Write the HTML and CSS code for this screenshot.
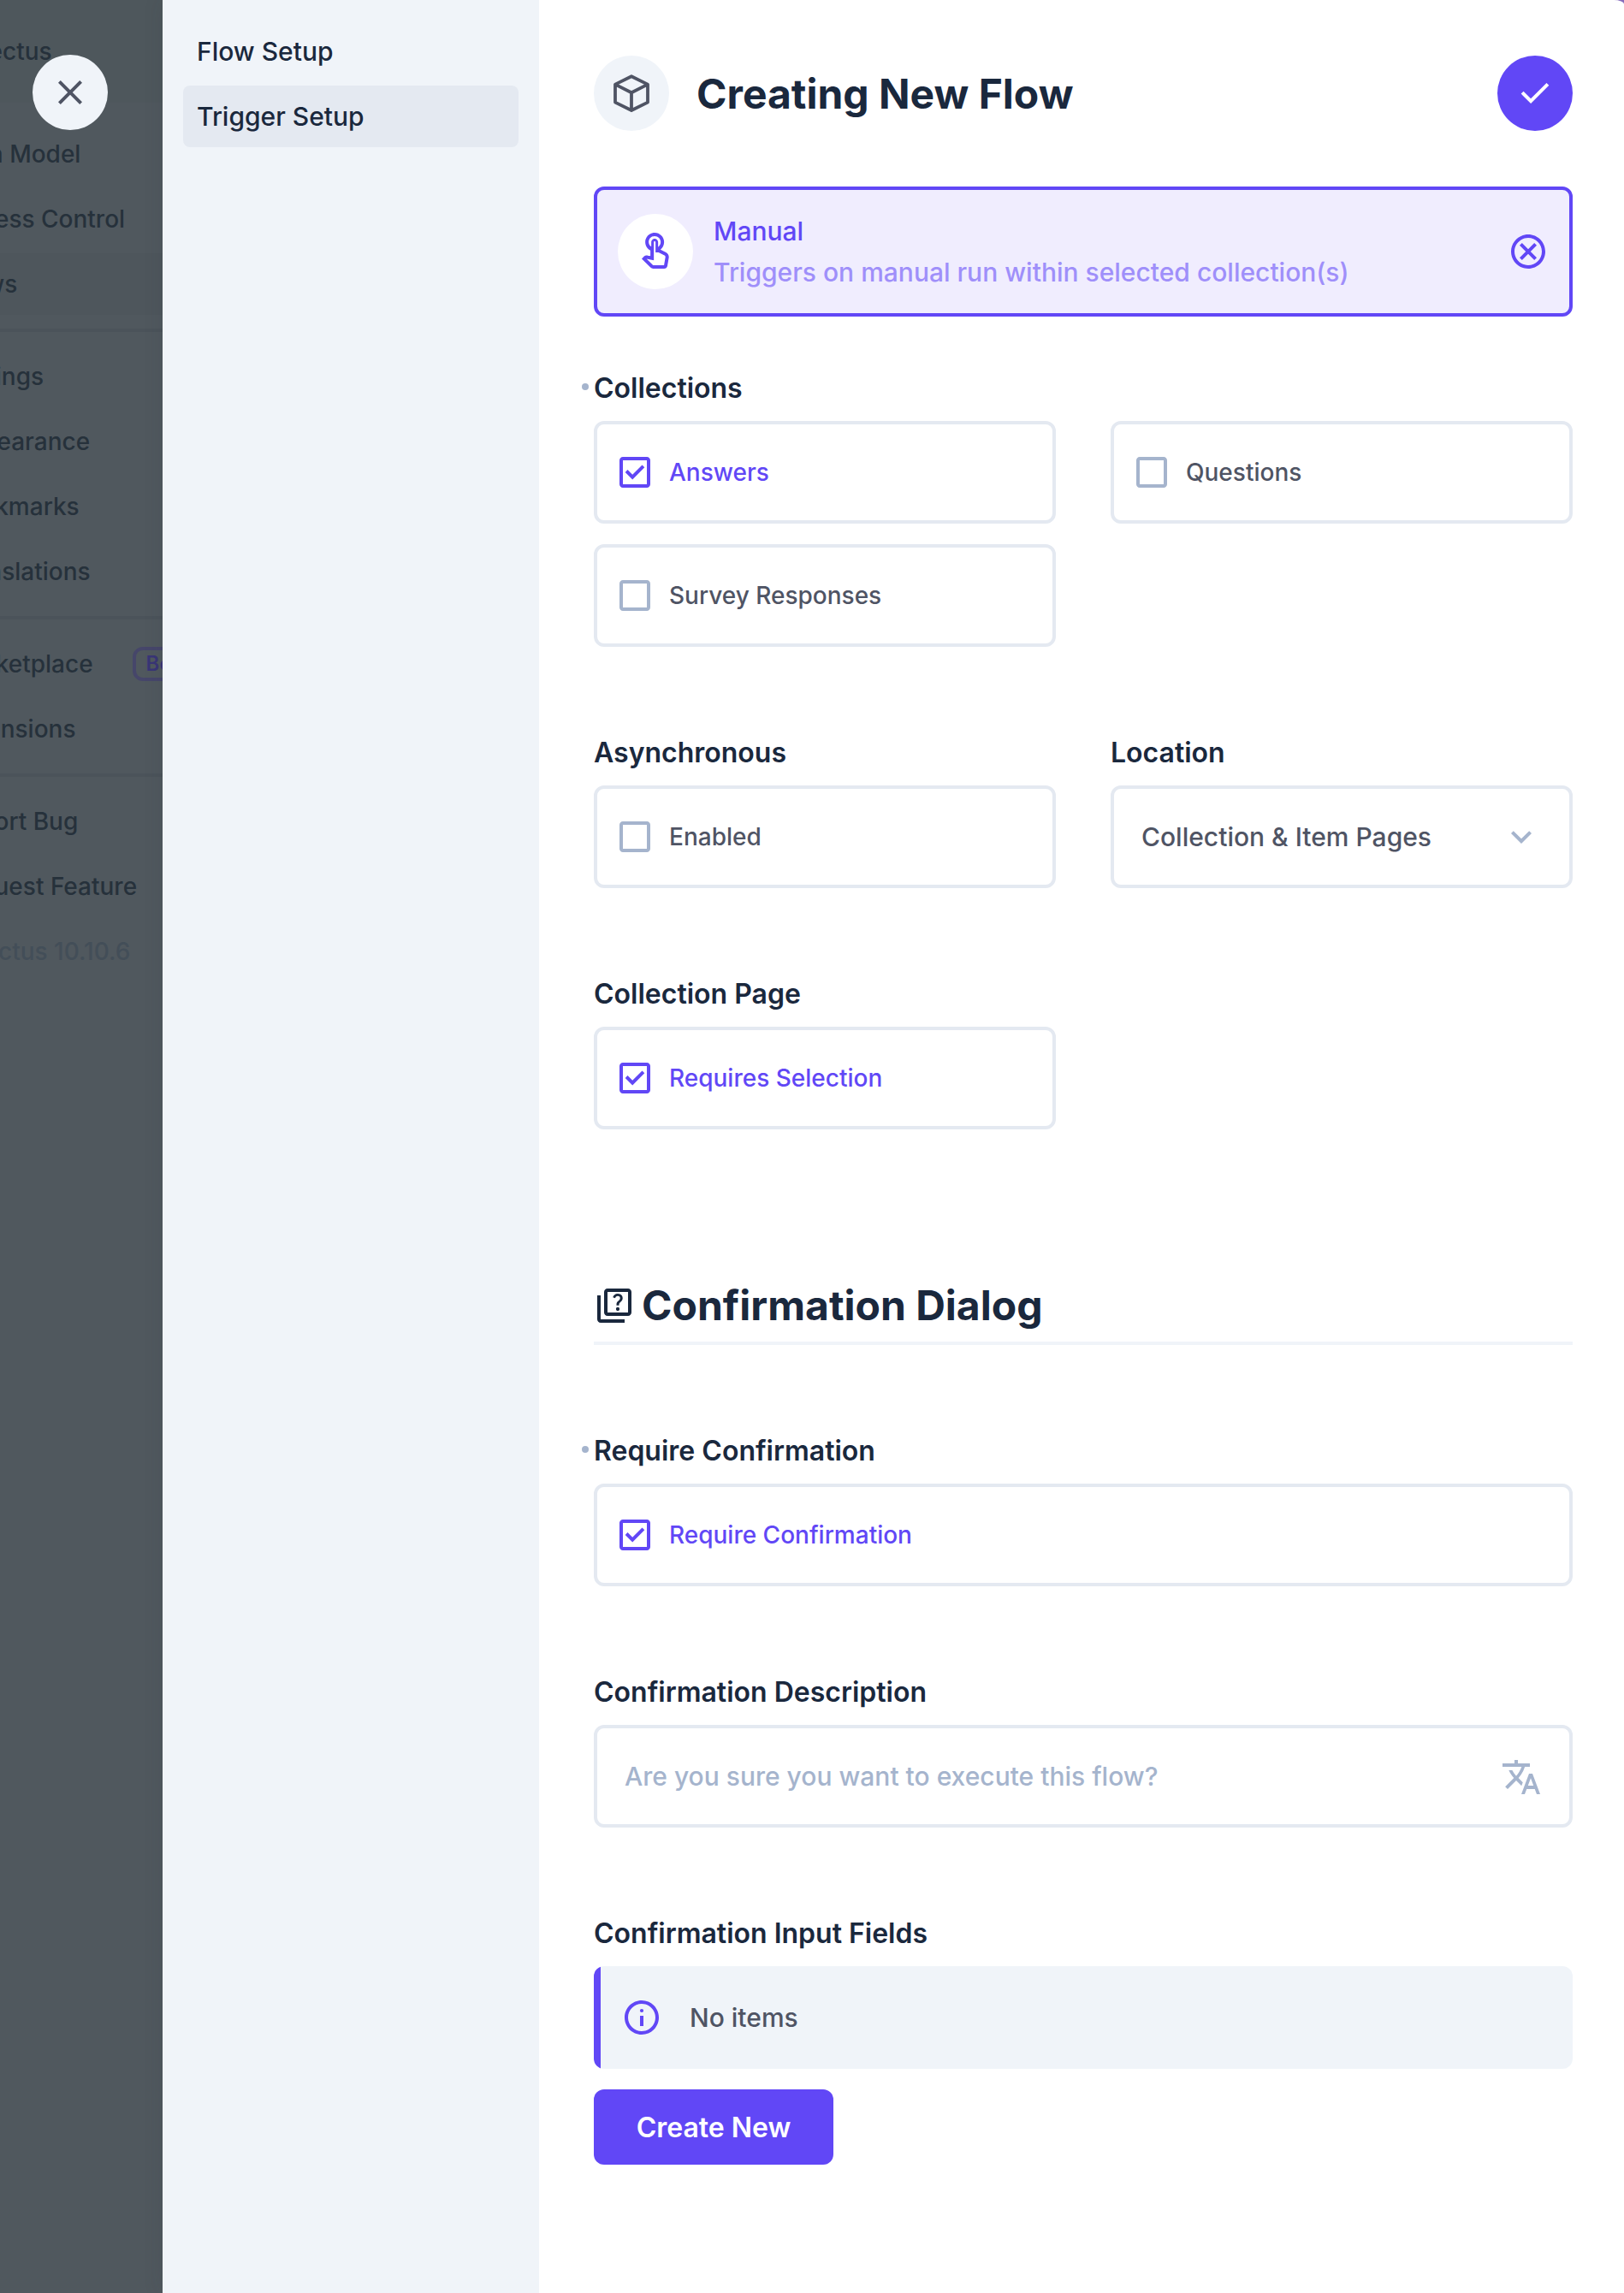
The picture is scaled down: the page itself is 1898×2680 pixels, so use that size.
FILE: index.html
```html
<!DOCTYPE html>
<html lang="en">
<head>
<meta charset="utf-8">
<title>Creating New Flow</title>
<link rel="stylesheet" href="styles.css">
</head>
<body>
<div class="app">
  <aside class="backdrop">
    <div class="project">Directus</div>
    <nav class="modules">
      <span class="module">Data Model</span>
      <span class="module">Access Control</span>
      <span class="module module-active">Flows</span>
      <hr class="rule">
      <span class="module">Settings</span>
      <span class="module">Appearance</span>
      <span class="module">Bookmarks</span>
      <span class="module">Translations</span>
      <hr class="rule">
      <span class="module">Marketplace <span class="badge">Beta</span></span>
      <span class="module">Extensions</span>
      <hr class="rule">
      <span class="module">Report Bug</span>
      <span class="module">Request Feature</span>
      <span class="module module-muted">Directus 10.10.6</span>
    </nav>
    <button class="round close" aria-label="Close">
      <svg class="icon" viewBox="0 0 24 24"><path d="M6.4 19 5 17.6l5.6-5.6L5 6.4 6.4 5l5.6 5.6L17.6 5 19 6.4 13.4 12l5.6 5.6-1.4 1.4-5.6-5.6z"/></svg>
    </button>
  </aside>

  <div class="drawer">
    <nav class="tabs">
      <a class="tab">Flow Setup</a>
      <a class="tab tab-active">Trigger Setup</a>
    </nav>

    <main class="content">
      <header class="header">
        <span class="round header-icon">
          <svg class="icon" viewBox="0 0 24 24"><path d="M12 2.1 21.500 6.800v10.500L12 22 2.500 17.300V6.800zM2.500 6.800 12 11.600l9.500-4.800M12 11.600V22" fill="none" stroke="currentColor" stroke-width="1.900" stroke-linejoin="round"/></svg>
        </span>
        <h1 class="title">Creating New Flow</h1>
        <button class="round save" aria-label="Save">
          <svg class="icon" viewBox="0 0 24 24"><path d="m9.550 18-5.700-5.700 1.425-1.425L9.550 15.150l9.175-9.175L20.150 7.400z"/></svg>
        </button>
      </header>

      <section class="trigger">
        <span class="round trigger-icon">
          <svg class="icon" viewBox="0 0 24 24"><path d="M18.19 12.44l-3.24-1.62c1.29-1 2.12-2.56 2.12-4.32C17.07 3.46 14.6 1 11.57 1S6.07 3.46 6.07 6.5c0 2.13 1.22 3.98 3 4.89v3.26c-2.11-.45-2.01-.44-2.26-.44-.53 0-1.03.21-1.41.59L4 16.22l5.09 5.09c.43.44 1.03.69 1.65.69h6.3c.98 0 1.81-.7 1.97-1.67l.8-4.71c.22-1.3-.43-2.58-1.62-3.18zm-.35 2.85l-.8 4.71h-6.3c-.09 0-.17-.04-.24-.1l-3.68-3.68 4.25.89V6.5c0-.28.22-.5.5-.5s.5.22.5.5v6h1.76l3.46 1.73c.4.2.62.63.55 1.06zM8.07 6.5c0-1.93 1.57-3.5 3.5-3.5s3.5 1.57 3.5 3.5c0 1.15-.59 2.2-1.5 2.85V6.5c0-1.1-.9-2-2-2s-2 .9-2 2v2.65c-.91-.64-1.5-1.5-1.5-2.65z"/></svg>
        </span>
        <div class="trigger-text">
          <div class="trigger-name">Manual</div>
          <div class="trigger-note">Triggers on manual run within selected collection(s)</div>
        </div>
        <svg class="icon" viewBox="0 0 24 24"><path d="M8.4 17 12 13.4l3.6 3.6 1.4-1.4-3.6-3.600L17 8.400 15.600 7 12 10.600 8.400 7 7 8.400l3.600 3.600L7 15.600zM12 2C6.47 2 2 6.47 2 12s4.47 10 10 10 10-4.47 10-10S17.53 2 12 2zm0 18c-4.41 0-8-3.59-8-8s3.59-8 8-8 8 3.59 8 8-3.59 8-8 8z" fill-rule="evenodd"/></svg>
      </section>

      <form class="form">
        <div class="field field-full">
          <h2 class="label edited">Collections</h2>
          <div class="choices">
            <div class="box checked"><svg class="icon" viewBox="0 0 24 24"><path d="M19 3H5c-1.1 0-2 .9-2 2v14c0 1.1.9 2 2 2h14c1.1 0 2-.9 2-2V5c0-1.1-.9-2-2-2zm0 2v14H5V5zM10.600 16.200l7.050-7.050-1.400-1.400-5.650 5.650-2.850-2.850-1.400 1.400z" fill-rule="evenodd"/></svg><span>Answers</span></div>
            <div class="box"><svg class="icon" viewBox="0 0 24 24"><path d="M19 5v14H5V5zm0-2H5c-1.1 0-2 .9-2 2v14c0 1.1.9 2 2 2h14c1.1 0 2-.9 2-2V5c0-1.1-.9-2-2-2z" fill-rule="evenodd"/></svg><span>Questions</span></div>
            <div class="box"><svg class="icon" viewBox="0 0 24 24"><path d="M19 5v14H5V5zm0-2H5c-1.1 0-2 .9-2 2v14c0 1.1.9 2 2 2h14c1.1 0 2-.9 2-2V5c0-1.1-.9-2-2-2z" fill-rule="evenodd"/></svg><span>Survey Responses</span></div>
          </div>
        </div>
        <div class="field">
          <h2 class="label">Asynchronous</h2>
          <div class="box"><svg class="icon" viewBox="0 0 24 24"><path d="M19 5v14H5V5zm0-2H5c-1.1 0-2 .9-2 2v14c0 1.1.9 2 2 2h14c1.1 0 2-.9 2-2V5c0-1.1-.9-2-2-2z" fill-rule="evenodd"/></svg><span>Enabled</span></div>
        </div>
        <div class="field">
          <h2 class="label">Location</h2>
          <div class="box input"><span>Collection &amp; Item Pages</span><svg class="icon" viewBox="0 0 24 24"><path d="M16.59 8.59 12 13.17 7.41 8.59 6 10l6 6 6-6z"/></svg></div>
        </div>
        <div class="field">
          <h2 class="label">Collection Page</h2>
          <div class="box checked"><svg class="icon" viewBox="0 0 24 24"><path d="M19 3H5c-1.1 0-2 .9-2 2v14c0 1.1.9 2 2 2h14c1.1 0 2-.9 2-2V5c0-1.1-.9-2-2-2zm0 2v14H5V5zM10.600 16.200l7.050-7.050-1.400-1.400-5.650 5.650-2.850-2.850-1.400 1.400z" fill-rule="evenodd"/></svg><span>Requires Selection</span></div>
        </div>
        <div class="divider field-full">
          <svg class="icon" viewBox="0 0 24 24"><path d="M4 6H2v14c0 1.1.9 2 2 2h14v-2H4zM20 2H8c-1.1 0-2 .9-2 2v12c0 1.1.9 2 2 2h12c1.1 0 2-.9 2-2V4c0-1.1-.9-2-2-2zm0 14H8V4h12zM13.51 10.160c.41-.73 1.180-1.160 1.630-1.800.48-.68.21-1.940-1.140-1.940-.88 0-1.320.67-1.500 1.230l-1.370-.57C11.510 5.960 12.520 5 13.990 5c1.230 0 2.080.56 2.510 1.260.37.6.58 1.730.01 2.570-.63.93-1.230 1.210-1.560 1.810-.13.240-.18.400-.18 1.180h-1.520c.01-.41-.06-1.080.26-1.660zM12.950 13.950c0-.59.47-1.040 1.050-1.040.59 0 1.040.45 1.040 1.040 0 .58-.44 1.050-1.040 1.050-.58 0-1.050-.47-1.050-1.050z" fill-rule="evenodd"/></svg>
          <h1 class="title">Confirmation Dialog</h1>
        </div>
        <div class="field field-full">
          <h2 class="label edited">Require Confirmation</h2>
          <div class="box checked"><svg class="icon" viewBox="0 0 24 24"><path d="M19 3H5c-1.1 0-2 .9-2 2v14c0 1.1.9 2 2 2h14c1.1 0 2-.9 2-2V5c0-1.1-.9-2-2-2zm0 2v14H5V5zM10.600 16.200l7.050-7.050-1.400-1.400-5.650 5.650-2.850-2.850-1.400 1.400z" fill-rule="evenodd"/></svg><span>Require Confirmation</span></div>
        </div>
        <div class="field field-full">
          <h2 class="label">Confirmation Description</h2>
          <div class="box input"><span class="placeholder">Are you sure you want to execute this flow?</span><svg class="icon translate" viewBox="0 0 24 24"><path d="m12.870 15.070-2.540-2.510.03-.03c1.740-1.940 2.980-4.170 3.710-6.530H17V4h-7V2H8v2H1v1.990h11.170C11.500 7.920 10.440 9.750 9 11.350 8.070 10.320 7.300 9.190 6.690 8h-2c.73 1.630 1.730 3.170 2.980 4.560l-5.090 5.020L4 19l5-5 3.110 3.110zM18.500 10h-2L12 22h2l1.120-3h4.750L21 22h2zm-2.620 7 1.620-4.330L19.120 17z"/></svg></div>
        </div>
        <div class="field field-full">
          <h2 class="label">Confirmation Input Fields</h2>
          <div class="notice"><svg class="icon" viewBox="0 0 24 24"><path d="M11 11h2v6h-2zM12 2C6.480 2 2 6.480 2 12s4.480 10 10 10 10-4.480 10-10S17.520 2 12 2zm0 18c-4.410 0-8-3.590-8-8s3.590-8 8-8 8 3.590 8 8-3.590 8-8 8z"/><circle cx="12" cy="8" r="1.050"/></svg><span>No items</span></div>
          <button type="button" class="create">Create New</button>
        </div>
      </form>
    </main>
  </div>
</div>
</body>
</html>
```
FILE: styles.css
```css
* { box-sizing: border-box; }

body {
  margin: 0;
  background: #8a6fc0;
  color: #4f5464;
  font-family: Inter, "Liberation Sans", sans-serif;
  font-weight: 500;
}

h1, h2 { margin: 0; }

button {
  border: 0;
  padding: 0;
  font: inherit;
}

.app {
  display: flex;
  height: 2680px;
  overflow: hidden;
}

.icon {
  flex: none;
  display: block;
  width: 48px;
  height: 48px;
  fill: currentColor;
}

.round {
  flex: none;
  display: flex;
  align-items: center;
  justify-content: center;
  width: 88px;
  height: 88px;
  border-radius: 50%;
}

/* Dimmed application behind the drawer */
.backdrop {
  position: relative;
  flex: none;
  width: 190px;
  overflow: hidden;
  background: #50585e;
  color: #26313b;
  font-size: 28px;
  white-space: nowrap;
}

.project {
  height: 120px;
  padding-top: 38px;
  line-height: 44px;
  text-indent: -51px;
  background: #4e575c;
}

.modules {
  display: flex;
  flex-direction: column;
  gap: 4px;
  padding-top: 24px;
}

.module {
  display: flex;
  align-items: center;
  height: 72px;
  margin-right: -120px;
  text-indent: -58px;
}

.module-active { background: #4e565c; }

.module-muted {
  color: #434e58;
  text-indent: -56px;
}

.rule {
  width: 100%;
  height: 4px;
  margin: 12px 0;
  border: 0;
  background: #4b535a;
}

.badge {
  height: 40px;
  margin-left: 46px;
  padding: 0 12px;
  border: 4px solid #46466a;
  border-radius: 12px;
  color: #393576;
  font-size: 24px;
  font-weight: 600;
  line-height: 32px;
  text-indent: 0;
}

.close {
  position: absolute;
  left: 38px;
  top: 64px;
  background: #f0f4f9;
  color: #4f5464;
}

/* Drawer */
.drawer {
  flex: 1;
  display: flex;
  overflow: hidden;
  z-index: 1;
  border-top-right-radius: 12px 5px;
  background: #fff;
  box-shadow: 0 0 24px rgba(38, 50, 56, 0.1);
}

.tabs {
  flex: none;
  display: flex;
  flex-direction: column;
  gap: 4px;
  width: 440px;
  padding: 24px;
  background: #f0f4f9;
}

.tab {
  height: 72px;
  padding-left: 16px;
  border-radius: 8px;
  color: #1a283d;
  font-size: 30px;
  line-height: 72px;
}

.tab-active { background: #e4e9f1; }

.content {
  flex: 1;
  padding: 65px 60px 0 64px;
}

.header {
  display: flex;
  align-items: center;
}

.header-icon { background: #f0f4f9; }

.title {
  padding-top: 1px;
  color: #1a283d;
  font-size: 48px;
  font-weight: 700;
  line-height: 58px;
}

.header .title {
  flex: 1;
  margin-left: 32px;
}

.save {
  background: #6147f6;
  color: #fff;
}

.trigger {
  display: flex;
  align-items: center;
  height: 152px;
  margin-top: 65px;
  padding: 0 24px;
  border: 4px solid #6147f6;
  border-radius: 12px;
  background: #f0edfe;
  color: #6147f6;
  font-size: 30px;
}

.trigger-icon { background: #fff; }

.trigger-text {
  flex: 1;
  margin-left: 24px;
  line-height: 48px;
}

.trigger-note { color: #9f8ffa; }

.form {
  display: grid;
  grid-template-columns: 1fr 1fr;
  column-gap: 64px;
  row-gap: 104px;
  margin-top: 64px;
}

.field-full { grid-column: 1 / -1; }

.label {
  position: relative;
  margin-bottom: 18px;
  color: #1a283d;
  font-size: 32px;
  font-weight: 600;
  line-height: 40px;
}

.edited::before {
  content: "";
  position: absolute;
  left: -14px;
  top: 14px;
  width: 8px;
  height: 8px;
  border-radius: 50%;
  background: #a5b4cd;
}

.choices {
  display: grid;
  grid-template-columns: 1fr 1fr;
  gap: 24px 64px;
}

.box {
  display: flex;
  align-items: center;
  gap: 16px;
  height: 120px;
  padding: 0 20px;
  border: 4px solid #e4e9f1;
  border-radius: 12px;
  font-size: 28px;
}

.box .icon { color: #a5b4cd; }
.checked, .checked .icon { color: #6147f6; }

.input {
  justify-content: space-between;
  padding: 0 32px;
  font-size: 30px;
}

.placeholder { color: #a5b4cd; }
.translate { margin-top: 2px; }

.divider {
  display: flex;
  gap: 8px;
  height: 76px;
  margin-top: 72px;
  border-bottom: 4px solid #f0f4f9;
}

.divider .icon {
  margin-top: 6px;
  color: #1a283d;
}

.notice {
  display: flex;
  align-items: center;
  gap: 32px;
  height: 120px;
  padding-left: 32px;
  border-radius: 12px;
  background: linear-gradient(90deg, #6147f6 8px, #f0f4f9 8px);
  font-size: 30px;
}

.notice .icon { color: #6147f6; }

.create {
  width: 280px;
  height: 88px;
  margin-top: 24px;
  border-radius: 12px;
  background: #6147f6;
  color: #fff;
  font-size: 32px;
  font-weight: 600;
}
```
